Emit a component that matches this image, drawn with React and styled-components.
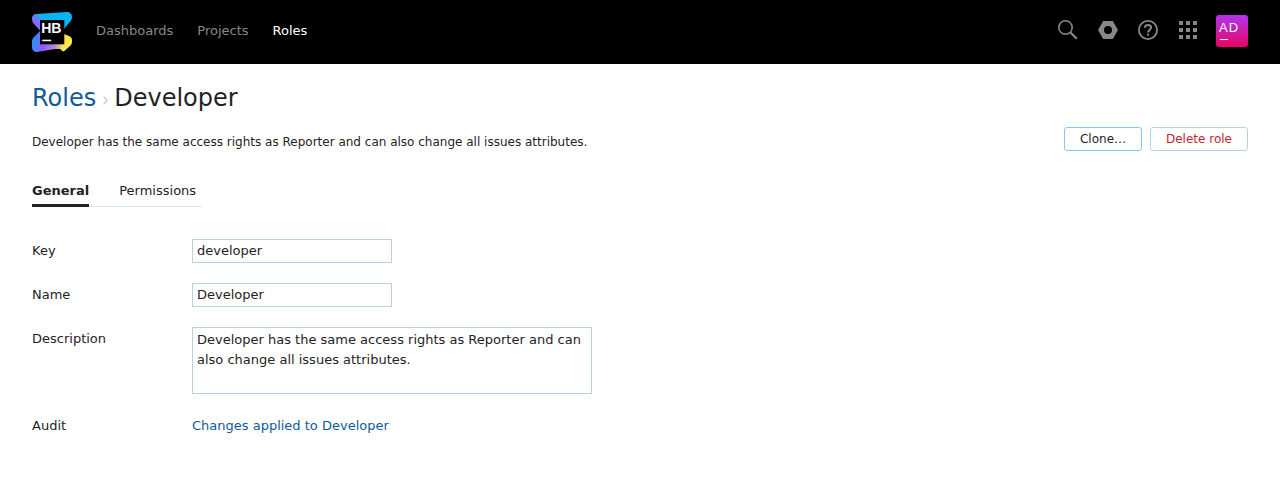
import React from 'react';
import styled, { createGlobalStyle } from 'styled-components';

const GlobalStyle = createGlobalStyle`
  * { box-sizing: border-box; }
  body {
    margin: 0;
    background: #fff;
    color: #1f2326;
    font: 13px/20px "DejaVu Sans", sans-serif;
    overflow: hidden;
  }
`;

const Header = styled.header`
  display: flex;
  align-items: center;
  height: 64px;
  padding: 0 32px;
  background: #000;
`;
const Logo = styled.svg`
  width: 40px;
  height: 40px;
  margin-right: 24px;
`;
const Nav = styled.nav`
  display: flex;
  gap: 24px;
  flex: 1;
  padding-bottom: 3px;
`;
const NavLink = styled.a`
  color: ${(p) => (p.$active ? '#fff' : '#888')};
`;
const Tray = styled.div`
  display: flex;
  align-items: center;
  padding-bottom: 2px;
`;
const TrayIcons = styled.div`
  display: flex;
  gap: 20px;
  margin-right: 18px;
`;
const TrayIcon = styled.svg`
  width: 20px;
  height: 20px;
  margin-bottom: 2px;
  color: #888;
`;
const Avatar = styled.div`
  display: flex;
  flex-direction: column;
  width: 32px;
  height: 32px;
  padding: 3px 3px 0;
  border-radius: 3px;
  background: linear-gradient(#b135ed, #e80462);
  color: #fff;
  font-family: "Liberation Sans", Arial, sans-serif;
  letter-spacing: 1px;

  &::after {
    content: '';
    width: 8px;
    height: 1px;
    margin: 1px 0 0 1px;
    background: #fff;
  }
`;

const Page = styled.main`
  padding: 18px 32px 0;
`;
const Title = styled.h1`
  display: flex;
  align-items: center;
  margin: 0;
  font-size: 24px;
  font-weight: 400;
  line-height: 32px;
`;
const Link = styled.a`
  color: #0f5b99;
`;
const Chevron = styled.svg`
  width: 5px;
  height: 9px;
  margin: 5px 6px 0 7px;
`;
const Summary = styled.div`
  display: flex;
  justify-content: space-between;
  margin-top: 13px;
  font-size: 12px;
`;
const SummaryText = styled.p`
  margin: 5px 0 0;
`;
const Actions = styled.div`
  display: flex;
  gap: 8px;
`;
const Button = styled.button`
  width: ${(p) => p.$width}px;
  height: 24px;
  padding: 0;
  border: 1px solid ${(p) => (p.$danger ? '#b8d1e5' : '#80c6ff')};
  border-radius: 3px;
  background: #fff;
  color: ${(p) => (p.$danger ? '#c22731' : '#1f2326')};
  font: inherit;
`;
const Tabs = styled.div`
  display: flex;
  gap: 30px;
  width: 170px;
  height: 26px;
  margin-top: 29px;
  box-shadow: inset 0 -1px #dfe5eb;
`;
const Tab = styled.div`
  height: 26px;
  font-weight: ${(p) => (p.$active ? 700 : 400)};
  border-bottom: ${(p) => (p.$active ? '3px solid #1f2326' : '0')};
`;
const Form = styled.form`
  display: flex;
  flex-direction: column;
  gap: 20px;
  margin-top: 32px;
`;
const Row = styled.div`
  display: grid;
  grid-template-columns: 160px 1fr;
  align-items: start;
`;
const Label = styled.label`
  padding-top: 2px;
`;
const Input = styled.input`
  width: 200px;
  height: 24px;
  padding: 0 4px 1px;
  border: 1px solid #b8d1e5;
  border-radius: 0;
  color: inherit;
  font: inherit;
`;
const TextArea = styled.textarea`
  display: block;
  width: 400px;
  height: 67px;
  padding: 2px 4px;
  border: 1px solid #b8d1e5;
  border-radius: 0;
  color: inherit;
  font: inherit;
  resize: none;
  overflow: hidden;
`;
const AuditLink = styled(Link)`
  padding-top: 2px;
`;

function HubLogo() {
  return (
    <Logo viewBox="0 0 40 40">
      <defs>
        <linearGradient id="top" x1="2" y1="14" x2="12" y2="3" gradientUnits="userSpaceOnUse">
          <stop offset="0.15" stopColor="#9a5cff" />
          <stop offset="0.9" stopColor="#08b5f2" />
        </linearGradient>
        <linearGradient id="bottom" x1="2" y1="28" x2="36" y2="32" gradientUnits="userSpaceOnUse">
          <stop offset="0" stopColor="#2e8df5" />
          <stop offset="0.28" stopColor="#9359fa" />
          <stop offset="0.62" stopColor="#a98ad0" />
          <stop offset="0.85" stopColor="#fce44f" />
        </linearGradient>
      </defs>
      <path fill="url(#top)" d="M4 2 35 0C38 0 40 2 40 5 40 7 39 9 37 11L32 17 8 18.500 2 12C0 10 0 8 0 6 0 4 2 2 4 2Z" />
      <path fill="url(#bottom)" d="M8 19 2 25C0 27 0 28 0 31V35C0 38 2 40 5 40L23 37 28 37 31 39.500Q32 39.500 33 38.500L38 34C40 32 40 31 40 28 40 26 39 25 37 24L32 22Z" />
      <path fill="#000" d="M8 8h24.300v24.300H8z" />
      <text x="9.200" y="21" fill="#fff" fontFamily="Liberation Sans, sans-serif" fontSize="14" fontWeight="700">HB</text>
      <path fill="#fff" d="M10.200 27.700h9v1.500h-9z" />
    </Logo>
  );
}

export default function App() {
  return (
    <>
      <GlobalStyle />
      <Header>
        <HubLogo />
        <Nav>
          <NavLink>Dashboards</NavLink>
          <NavLink>Projects</NavLink>
          <NavLink $active>Roles</NavLink>
        </Nav>
        <Tray>
          <TrayIcons>
            <TrayIcon viewBox="0 0 20 20" fill="none" stroke="currentColor">
              <circle cx="7.500" cy="7.500" r="6.700" strokeWidth="1.600" />
              <path d="m12.200 12.200 6.600 6.600" strokeWidth="2.200" />
            </TrayIcon>
            <TrayIcon viewBox="0 0 20 20" fill="currentColor" fillRule="evenodd">
              <path d="M5.200 1h9.600L20 10l-5.200 9H5.200L0 10ZM10 6a4 4 0 1 0 0 8 4 4 0 0 0 0-8Z" />
            </TrayIcon>
            <TrayIcon viewBox="0 0 20 20" fill="none" stroke="currentColor">
              <circle cx="10" cy="10" r="9.100" strokeWidth="1.800" />
              <path d="M6.900 7.700C6.900 5.900 8.200 4.900 10 4.900s3.100 1.100 3.100 2.700c0 2.300-3 2.300-3 4.900" strokeWidth="2" />
              <path d="M9.100 13.700h2v2h-2z" fill="currentColor" stroke="none" />
            </TrayIcon>
            <TrayIcon viewBox="0 0 20 20" fill="currentColor">
              {[1, 8, 15].map((y) => (
                <path key={y} d={`M1 ${y}h4v4H1zM8 ${y}h4v4H8zM15 ${y}h4v4h-4z`} />
              ))}
            </TrayIcon>
          </TrayIcons>
          <Avatar>AD</Avatar>
        </Tray>
      </Header>
      <Page>
        <Title>
          <Link>Roles</Link>
          <Chevron viewBox="0 0 5 9" fill="none" stroke="#c3c7cb" strokeWidth="1.100">
            <path d="m.5.5 3.800 4-3.800 4" />
          </Chevron>
          Developer
        </Title>
        <Summary>
          <SummaryText>
            Developer has the same access rights as Reporter and can also change all issues attributes.
          </SummaryText>
          <Actions>
            <Button $width={78}>Clone…</Button>
            <Button $width={98} $danger>Delete role</Button>
          </Actions>
        </Summary>
        <Tabs>
          <Tab $active>General</Tab>
          <Tab>Permissions</Tab>
        </Tabs>
        <Form>
          <Row>
            <Label htmlFor="key">Key</Label>
            <Input id="key" defaultValue="developer" />
          </Row>
          <Row>
            <Label htmlFor="name">Name</Label>
            <Input id="name" defaultValue="Developer" />
          </Row>
          <Row>
            <Label htmlFor="description">Description</Label>
            <TextArea
              id="description"
              spellCheck={false}
              defaultValue="Developer has the same access rights as Reporter and can also change all issues attributes."
            />
          </Row>
          <Row>
            <Label as="span">Audit</Label>
            <AuditLink>Changes applied to Developer</AuditLink>
          </Row>
        </Form>
      </Page>
    </>
  );
}
